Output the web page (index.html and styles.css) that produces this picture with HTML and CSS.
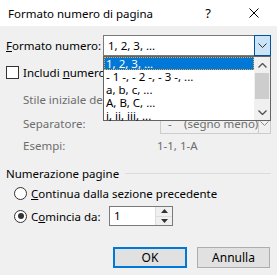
FILE: index.html
```html
<!DOCTYPE html>
<html lang="it">
<head>
  <meta charset="UTF-8">
  <title>Formato numero di pagina</title>
  <link rel="stylesheet" href="styles.css">
</head>
<body>
  <div class="dialog">
    <!-- Barra del titolo -->
    <div class="titlebar">
      <span class="title">Formato numero di pagina</span>
      <span class="help">?</span>
      <span class="close">
        <svg width="10" height="10" viewBox="0 0 10 10"><path d="M0.5 0.5 L9.5 9.5 M9.5 0.5 L0.5 9.5" stroke="#000" stroke-width="1" fill="none"/></svg>
      </span>
    </div>

    <div class="content">
      <div class="row row-format">
        <span class="label"><u>F</u>ormato numero:</span>
        <div class="combo">
          <span class="combo-text">1, 2, 3, ...</span>
          <span class="combo-btn">
            <svg width="9" height="5" viewBox="0 0 9 5"><path d="M0.5 0.5 L4.5 4.5 L8.5 0.5" stroke="#333" fill="none"/></svg>
          </span>
        </div>
      </div>

      <div class="row row-check">
        <span class="checkbox"></span>
        <span class="label">Includi <u>n</u>umero</span>
      </div>

      <div class="row row-stile">
        <span class="label disabled indent">Stile iniziale del</span>
      </div>

      <div class="row row-sep">
        <span class="label disabled indent">Separatore:</span>
        <div class="combo combo-off">
          <span class="combo-text"><span class="dash">-</span>(segno meno)</span>
          <span class="combo-btn">
            <svg width="9" height="5" viewBox="0 0 9 5"><path d="M0.5 0.5 L4.5 4.5 L8.5 0.5" stroke="#8a8a8a" fill="none"/></svg>
          </span>
        </div>
      </div>

      <div class="row row-esempi">
        <span class="label disabled indent esempi-label">Esempi:</span>
        <span class="disabled">1-1, 1-A</span>
      </div>

      <div class="row row-group">
        <span class="label">Numerazione pagine</span>
        <span class="group-line"></span>
      </div>

      <div class="row row-radio1">
        <span class="radio"></span>
        <span class="label"><u>C</u>ontinua dalla sezione precedente</span>
      </div>

      <div class="row row-radio2">
        <span class="radio checked"></span>
        <span class="label radio2-label">C<u>o</u>mincia da:</span>
        <div class="spin">
          <span class="spin-text">1</span>
          <span class="spin-btns">
            <span class="spin-up"><svg width="7" height="4" viewBox="0 0 7 4"><path d="M0 4 L3.5 0 L7 4 Z" fill="#333"/></svg></span>
            <span class="spin-down"><svg width="7" height="4" viewBox="0 0 7 4"><path d="M0 0 L3.5 4 L7 0 Z" fill="#333"/></svg></span>
          </span>
        </div>
      </div>

      <div class="row row-buttons">
        <button class="btn btn-default">OK</button>
        <button class="btn">Annulla</button>
      </div>
    </div>

    <!-- Elenco a discesa aperto -->
    <div class="dropdown">
      <div class="items">
        <div class="item selected">1, 2, 3, ...</div>
        <div class="item">- 1 -, - 2 -, - 3 -, ...</div>
        <div class="item">a, b, c, ...</div>
        <div class="item">A, B, C, ...</div>
        <div class="item">i, ii, iii, ...</div>
      </div>
      <div class="scrollbar">
        <span class="sb-arrow">
          <svg width="9" height="5" viewBox="0 0 9 5"><path d="M0.5 4.5 L4.5 0.5 L8.5 4.5" stroke="#555" stroke-width="1.4" fill="none"/></svg>
        </span>
        <span class="sb-thumb"></span>
        <span class="sb-track"></span>
        <span class="sb-arrow">
          <svg width="9" height="5" viewBox="0 0 9 5"><path d="M0.5 0.5 L4.5 4.5 L8.5 0.5" stroke="#555" stroke-width="1.4" fill="none"/></svg>
        </span>
      </div>
    </div>
  </div>
</body>
</html>
```

FILE: styles.css
```css
/* Generale */
body {
  margin: 0;
  padding: 0;
  background-color: #f0f0f0;
  font-family: "Noto Sans", "Open Sans", sans-serif;
  font-size: 11.5px;
  color: #000;
}

.dialog {
  position: relative;
  width: 277px;
  height: 275px;
  overflow: hidden;
}

/* Barra del titolo */
.titlebar {
  height: 26px;
  background-color: #ffffff;
  display: flex;
  align-items: center;
}

.title {
  padding-left: 8px;
  flex: 1;
}

.help {
  width: 46px;
  text-align: center;
  font-size: 13px;
}

.close {
  width: 46px;
  display: flex;
  justify-content: center;
}

/* Contenuto */
.content {
  padding: 0 6px;
}

.row {
  display: flex;
  align-items: center;
  height: 18px;
}

.label {
  white-space: nowrap;
}

.disabled {
  color: #6d6d6d;
}

.indent {
  margin-left: 17px;
}

.esempi-label {
  width: 134px;
}

.row-format {
  margin-top: 9px;
  height: 21px;
}

.row-check {
  margin-top: 7px;
}

.row-stile {
  margin-top: 9px;
}

.row-sep {
  margin-top: 4px;
  height: 22px;
}

.row-esempi {
  margin-top: 2px;
}

.row-group {
  margin-top: 10px;
}

.row-radio1 {
  margin-top: 2px;
}

.row-radio2 {
  margin-top: 4px;
  height: 20px;
}

.row-buttons {
  margin-top: 21px;
  height: 21px;
  justify-content: flex-end;
  gap: 10px;
  padding-right: 1px;
}

/* Combo */
.combo {
  margin-left: auto;
  width: 168px;
  height: 21px;
  box-sizing: border-box;
  border: 1px solid #7a7a7a;
  background-color: #ffffff;
  display: flex;
  align-items: center;
  white-space: nowrap;
}

.combo-text {
  padding-left: 4px;
  flex: 1;
}

.combo-btn {
  width: 17px;
  height: 21px;
  box-sizing: border-box;
  margin: -1px -1px -1px 0;
  border: 1px solid #005499;
  background-color: #cce4f7;
  display: flex;
  align-items: center;
  justify-content: center;
}

.row-sep .combo {
  width: 111px;
  height: 22px;
}

.combo-off {
  background-color: #f0f0f0;
  border-color: #cccccc;
  color: #6d6d6d;
}

.combo-off .combo-btn {
  height: 22px;
  border: 1px solid #cccccc;
  background-color: #f0f0f0;
}

.dash {
  display: inline-block;
  width: 16px;
  padding-left: 3px;
}

/* Checkbox e radio */
.checkbox {
  flex: none;
  width: 11px;
  height: 11px;
  border: 1px solid #333333;
  background-color: #ffffff;
  margin-right: 4px;
}

.radio {
  flex: none;
  width: 11px;
  height: 11px;
  border: 1px solid #333333;
  border-radius: 50%;
  background-color: #ffffff;
  margin-left: 8px;
  margin-right: 4px;
  position: relative;
}

.radio.checked::after {
  content: "";
  position: absolute;
  left: 2.5px;
  top: 2.5px;
  width: 6px;
  height: 6px;
  border-radius: 50%;
  background-color: #333333;
}

.group-line {
  flex: 1;
  height: 1px;
  background-color: #dcdcdc;
  margin-left: 6px;
}

/* Spin */
.radio2-label {
  width: 78px;
}

.spin {
  width: 64px;
  height: 20px;
  box-sizing: border-box;
  border: 1px solid #7a7a7a;
  background-color: #ffffff;
  display: flex;
}

.spin-text {
  flex: 1;
  padding-left: 4px;
  line-height: 18px;
}

.spin-btns {
  width: 16px;
  display: flex;
  flex-direction: column;
  border-left: 1px solid #dcdcdc;
}

.spin-up,
.spin-down {
  flex: 1;
  display: flex;
  align-items: center;
  justify-content: center;
  background-color: #f0f0f0;
}

.spin-up {
  border-bottom: 1px solid #dcdcdc;
}

/* Pulsanti */
.btn {
  font-family: inherit;
  font-size: 12px;
  width: 73px;
  height: 21px;
  border: 1px solid #adadad;
  background-color: #e1e1e1;
  padding: 0;
  color: #000;
}

.btn-default {
  width: 74px;
  border: 2px solid #0078d7;
}

/* Elenco a discesa */
.dropdown {
  position: absolute;
  left: 103px;
  top: 56px;
  width: 168px;
  height: 65px;
  box-sizing: border-box;
  border: 1px solid #646464;
  background-color: #ffffff;
  display: flex;
}

.items {
  flex: 1;
}

.item {
  height: 13px;
  line-height: 13px;
  padding-left: 2px;
  white-space: nowrap;
  box-sizing: border-box;
}

.item.selected {
  background-color: #0078d7;
  color: #ffffff;
  outline: 1px dotted #f5a33c;
  outline-offset: -1px;
}

.scrollbar {
  width: 16px;
  background-color: #f0f0f0;
  display: flex;
  flex-direction: column;
}

.sb-arrow {
  height: 16px;
  display: flex;
  align-items: center;
  justify-content: center;
}

.sb-thumb {
  height: 26px;
  background-color: #cdcdcd;
  margin: 0 1px;
}

.sb-track {
  flex: 1;
}
```
